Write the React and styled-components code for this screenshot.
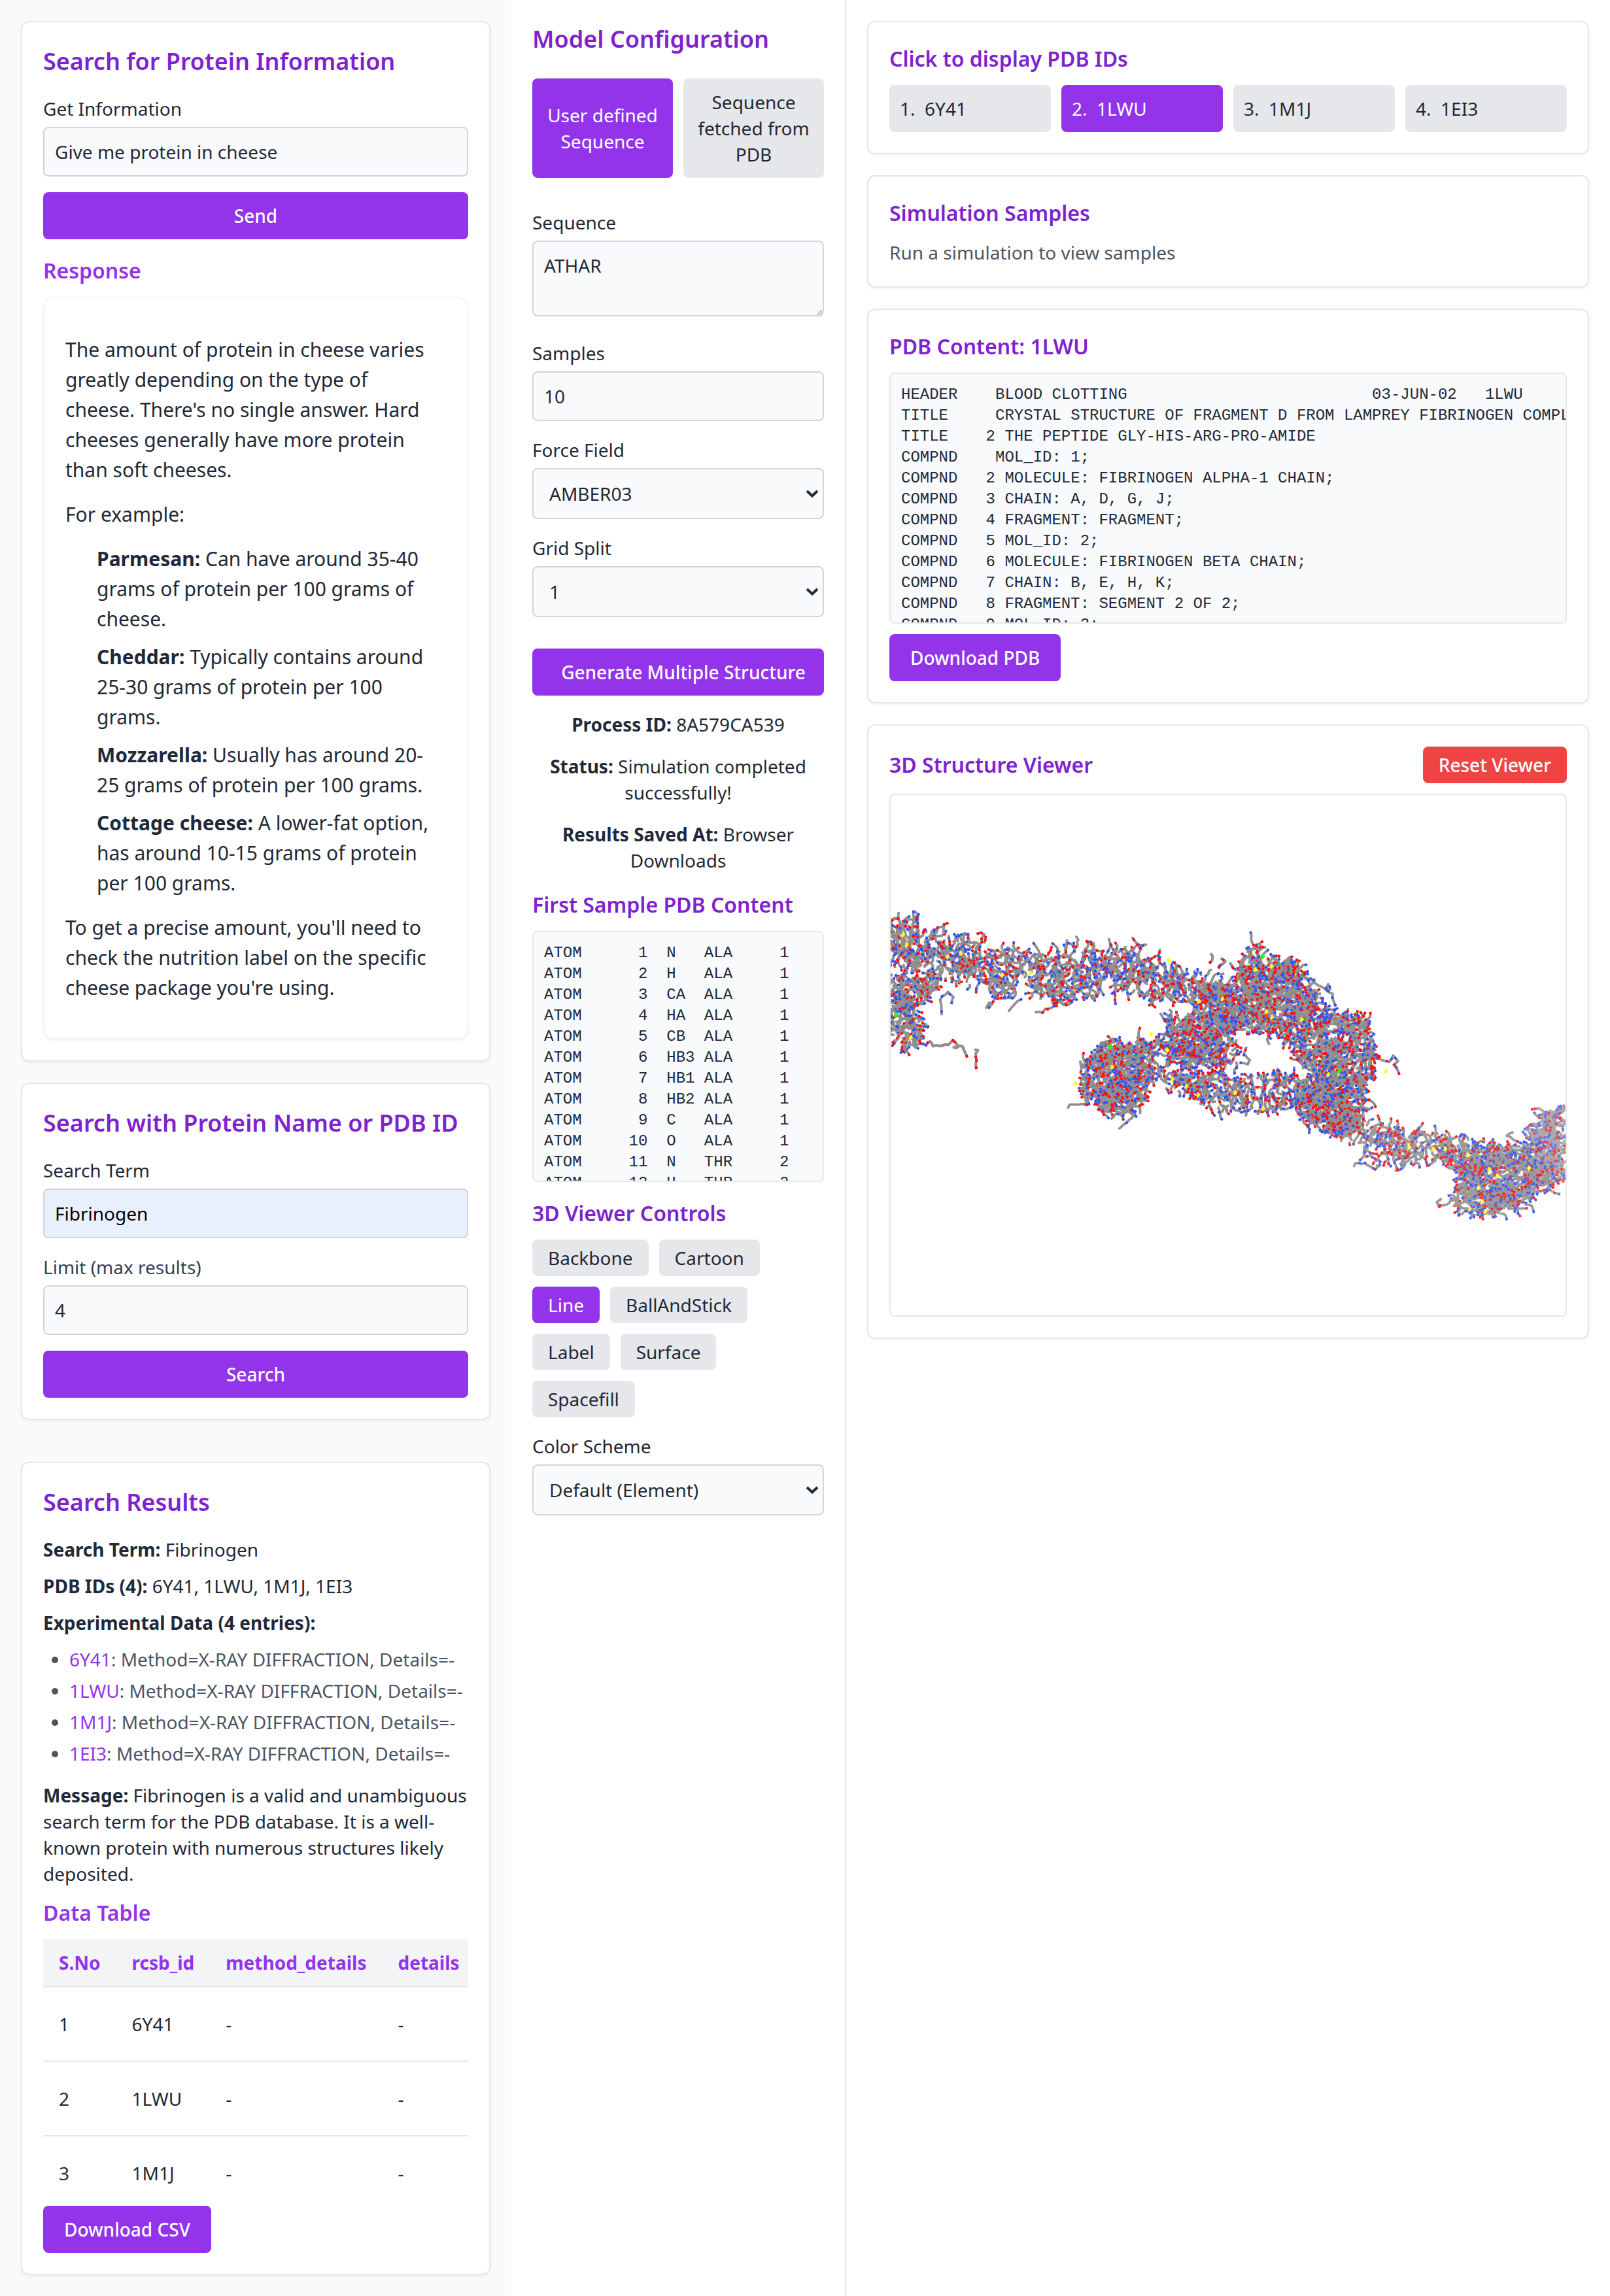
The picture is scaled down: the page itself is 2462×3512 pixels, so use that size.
import React, { useMemo, useState } from "react";
import styled, { createGlobalStyle, css } from "styled-components";

const GlobalStyle = createGlobalStyle`
  *, *::before, *::after { box-sizing: border-box; }
  body {
    margin: 0;
    background: #ffffff;
    color: #1f2937;
    font-family: "Noto Sans", "Liberation Sans", sans-serif;
    font-size: 28px;
    line-height: 40px;
  }
  h1, h2, h3, p, ul, pre { margin: 0; padding: 0; }
  button, input, select, textarea { font: inherit; color: inherit; margin: 0; }
`;

/* ---------- layout ---------- */

const Page = styled.div`
  display: grid;
  grid-template-columns: minmax(0, 391fr) 512px minmax(0, 584fr);
  min-height: 100vh;
`;

const SearchColumn = styled.aside`
  display: flex;
  flex-direction: column;
  gap: 32px;
  padding: 32px;
  background: #f9fafb;
`;

const ConfigColumn = styled.section`
  display: flex;
  flex-direction: column;
  gap: 24px;
  padding: 32px;
  border-right: 2px solid #e5e7eb;
`;

const ViewerColumn = styled.main`
  display: flex;
  flex-direction: column;
  gap: 32px;
  padding: 32px;
`;

const Card = styled.section`
  display: flex;
  flex-direction: column;
  gap: ${(p) => p.$gap || 24}px;
  padding: 32px;
  margin-top: ${(p) => (p.$apart ? 32 : 0)}px;
  background: #ffffff;
  border: 2px solid #e5e7eb;
  border-radius: 12px;
  box-shadow: 0 2px 4px rgba(0, 0, 0, 0.05);
`;

const Stack = styled.div`
  display: flex;
  flex-direction: column;
  gap: ${(p) => p.$gap}px;
`;

const Bar = styled.div`
  display: flex;
  align-items: center;
  justify-content: space-between;
`;

/* ---------- text ---------- */

const Title = styled.h2`
  color: #7e22ce;
  font-size: 36px;
  line-height: 56px;
  font-weight: 600;
`;

const Subtitle = styled.h3`
  color: ${(p) => (p.$bright ? "#9333ea" : "#7e22ce")};
  font-size: 32px;
  line-height: 48px;
  font-weight: 600;
`;

const Muted = styled.p`
  color: #4b5563;
`;

const Status = styled.p`
  text-align: center;
`;

/* ---------- controls ---------- */

const Field = styled.div`
  display: flex;
  flex-direction: column;
  gap: 8px;
`;

const Label = styled.label`
  color: ${(p) => (p.$soft ? "#374151" : "#1f2937")};
`;

const control = css`
  width: 100%;
  padding: 16px;
  background: #f9fafb;
  border: 2px solid #d1d5db;
  border-radius: 8px;
  outline: none;
`;

const TextInput = styled.input`
  ${control}
  height: 76px;
  ${(p) => p.$filled && "background: #e8f0fe; color: #000000;"}
`;

const TextArea = styled.textarea`
  ${control}
  display: block;
  height: 116px;
  margin-bottom: 12px;
  resize: both;
`;

const SelectBox = styled.div`
  display: grid;
  align-items: center;
  > * { grid-area: 1 / 1; }
  > svg { justify-self: end; margin-right: 8px; pointer-events: none; }
`;

const NativeSelect = styled.select`
  ${control}
  height: 78px;
  padding-left: 24px;
  appearance: none;
`;

const Button = styled.button`
  align-self: ${(p) => (p.$fit ? "flex-start" : "stretch")};
  padding: 16px 32px;
  color: #ffffff;
  background: #9333ea;
  border: 0;
  border-radius: 8px;
  font-weight: 500;
  cursor: pointer;
`;

const GenerateButton = styled(Button)`
  margin-top: 24px;
  padding: 16px 24px 16px 40px;
  white-space: nowrap;
`;

const ResetButton = styled(Button)`
  padding: 8px 24px;
  background: #ef4444;
`;

const Choice = styled.button`
  padding: 16px;
  color: ${(p) => (p.$active ? "#ffffff" : "#1f2937")};
  background: ${(p) => (p.$active ? "#9333ea" : "#e5e7eb")};
  border: 0;
  border-radius: 8px;
  cursor: pointer;
`;

const ModeRow = styled.div`
  display: grid;
  grid-template-columns: 1fr 1fr;
  gap: 16px;
  margin: 8px 0 24px;
`;

const StyleRow = styled.div`
  display: flex;
  flex-wrap: wrap;
  gap: 16px;
`;

const StyleChoice = styled(Choice)`
  padding: 8px 24px;
`;

const IdGrid = styled.div`
  display: grid;
  grid-template-columns: repeat(4, 1fr);
  gap: 16px;
`;

const IdChoice = styled(Choice)`
  text-align: left;
  white-space: pre;
`;

/* ---------- content blocks ---------- */

const Answer = styled.div`
  display: flex;
  flex-direction: column;
  gap: 22px;
  padding: 56px 40px 54px 32px;
  background: #ffffff;
  border: 2px solid #f3f4f6;
  border-radius: 16px;
  box-shadow: 0 2px 4px rgba(0, 0, 0, 0.05);
  font-size: 30px;
  line-height: 46px;
`;

const AnswerList = styled.ul`
  display: flex;
  flex-direction: column;
  gap: 12px;
  padding-left: 48px;
  list-style: none;
`;

const EntryList = styled.ul`
  padding-left: 40px;
  margin-bottom: 8px;
  color: #4b5563;
  list-style: disc;
  li + li { margin-top: 8px; }
  a { color: #9333ea; text-decoration: none; }
`;

const TableScroll = styled.div`
  max-height: 384px;
  overflow: auto;
  scrollbar-width: none;
`;

const Table = styled.table`
  min-width: 100%;
  border-collapse: separate;
  border-spacing: 0;
  text-align: left;
  white-space: nowrap;
  th {
    position: sticky;
    top: 0;
    padding: 16px 24px;
    color: #9333ea;
    background: #f3f4f6;
    border-bottom: 2px solid #e5e7eb;
    font-weight: 700;
  }
  td {
    padding: 36px 24px;
    border-bottom: 2px solid #e5e7eb;
  }
`;

const Listing = styled.pre`
  height: 384px;
  padding: 16px;
  overflow: auto;
  scrollbar-width: none;
  background: #f9fafb;
  border: 2px solid #e5e7eb;
  border-radius: 8px;
  font-family: "Liberation Mono", monospace;
  font-size: 24px;
  line-height: 32px;
`;

const Stage = styled.div`
  height: 800px;
  overflow: hidden;
  border: 2px solid #e5e7eb;
  border-radius: 8px;
  svg { display: block; width: 100%; height: 100%; }
`;

/* ---------- data ---------- */

const PDB_IDS = ["6Y41", "1LWU", "1M1J", "1EI3"];

const CHEESES = [
  ["Parmesan:", "Can have around 35-40 grams of protein per 100 grams of cheese."],
  ["Cheddar:", "Typically contains around 25-30 grams of protein per 100 grams."],
  ["Mozzarella:", "Usually has around 20-25 grams of protein per 100 grams."],
  ["Cottage cheese:", "A lower-fat option, has around 10-15 grams of protein per 100 grams."],
];

const SAMPLE_ATOMS = [
  ["N", "ALA", 1],
  ["H", "ALA", 1],
  ["CA", "ALA", 1],
  ["HA", "ALA", 1],
  ["CB", "ALA", 1],
  ["HB3", "ALA", 1],
  ["HB1", "ALA", 1],
  ["HB2", "ALA", 1],
  ["C", "ALA", 1],
  ["O", "ALA", 1],
  ["N", "THR", 2],
  ["H", "THR", 2],
];

const SAMPLE_PDB = SAMPLE_ATOMS.map(
  ([name, residue, seq], i) =>
    "ATOM  " + String(i + 1).padStart(5) + "  " + name.padEnd(4) + residue + String(seq).padStart(6)
).join("\n");

const PDB_CONTENT = [
  "HEADER    BLOOD CLOTTING                          03-JUN-02   1LWU",
  "TITLE     CRYSTAL STRUCTURE OF FRAGMENT D FROM LAMPREY FIBRINOGEN COMPLEX WITH",
  "TITLE    2 THE PEPTIDE GLY-HIS-ARG-PRO-AMIDE",
  "COMPND    MOL_ID: 1;",
  "COMPND   2 MOLECULE: FIBRINOGEN ALPHA-1 CHAIN;",
  "COMPND   3 CHAIN: A, D, G, J;",
  "COMPND   4 FRAGMENT: FRAGMENT;",
  "COMPND   5 MOL_ID: 2;",
  "COMPND   6 MOLECULE: FIBRINOGEN BETA CHAIN;",
  "COMPND   7 CHAIN: B, E, H, K;",
  "COMPND   8 FRAGMENT: SEGMENT 2 OF 2;",
  "COMPND   9 MOL_ID: 3;",
].join("\n");

const VIEW_STYLES = ["Backbone", "Cartoon", "Line", "BallAndStick", "Label", "Surface", "Spacefill"];

/* ---------- molecule drawing ---------- */

/* Outlines of the folded domains, in model units. */
const DOMAINS = [
  { cover: 1.25, lean: true, pts: "32,120 88,125 100,175 190,200 250,235 290,250 400,265 450,240 540,255 600,285 660,320 720,370 800,395 800,480 740,510 650,475 560,440 500,450 400,480 330,460 240,440 170,390 110,345 32,350" },
  { cover: 1.9, pts: "32,370 110,375 140,410 120,470 100,520 100,580 105,620 85,685 65,695 32,630" },
  { cover: 2.3, pts: "830,240 860,232 862,285 935,305 945,360 970,390 985,450 995,520 990,600 960,650 910,615 850,610 795,605 720,560 700,500 740,440 800,400 810,300" },
  { cover: 2.3, pts: "1000,535 1085,550 1100,640 1115,690 1100,790 1080,870 1078,970 1060,1035 980,1020 930,950 965,800 935,740 915,650 960,600" },
  { cover: 2.2, pts: "645,560 720,530 790,560 790,640 805,730 775,765 700,760 625,740 612,660 640,620" },
  { cover: 2.3, pts: "490,675 520,645 600,650 625,710 618,820 600,890 565,960 540,975 495,950 460,890 452,810 470,740" },
  { cover: 1.5, lean: true, pts: "620,780 700,790 820,800 870,795 960,815 980,860 980,965 920,960 800,935 720,935 690,880 635,860" },
  { cover: 1.5, lean: true, fade: 1, pts: "980,980 1080,975 1130,1020 1240,1050 1320,1060 1390,1110 1380,1200 1260,1175 1110,1175 1070,1100 990,1035" },
  { cover: 2.1, fade: 1, pts: "1280,1150 1400,1110 1460,1080 1480,1200 1520,1250 1470,1280 1440,1350 1380,1400 1295,1390 1278,1340 1295,1270" },
  { cover: 2.3, fade: 2, pts: "1450,1070 1465,1000 1480,950 1530,940 1532,1245 1450,1235" },
];

/* Loose ends that hang clear of the domains. */
const LOOPS = [
  { red: true, pts: "110,670 120,650 125,672 160,668 170,645 180,665 172,680 190,670 195,690 200,715" },
  { red: true, pts: "218,688 225,690 221,705 222,765" },
  { red: true, pts: "742,275 748,290 742,315" },
  { red: true, pts: "765,295 775,310 760,335" },
  { red: true, pts: "785,315 790,335" },
  { pts: "85,95 92,110 92,130 70,128 58,140 60,165" },
  { pts: "50,98 50,125 36,130" },
  { pts: "243,512 250,485 258,490 250,505 262,470 300,465" },
  { pts: "293,525 305,495 320,470" },
  { pts: "352,528 368,528 375,515 400,500 405,480" },
  { pts: "568,205 582,240 598,240 585,250" },
  { pts: "424,215 420,275 405,300" },
  { pts: "443,200 448,215 445,250" },
  { pts: "516,210 520,240 530,270" },
  { pts: "630,255 625,285 612,300" },
  { pts: "530,440 530,488" },
  { pts: "630,530 640,560" },
  { pts: "970,395 1000,435 1008,430 1003,410 998,425 1012,450 1018,495" },
  { pts: "1048,510 1045,545" },
  { pts: "1120,730 1140,740 1148,712 1158,735 1150,750 1160,790" },
  { pts: "538,1028 548,1010 562,990 575,955" },
  { pts: "425,940 430,925 450,920 465,925" },
  { pts: "453,735 455,780" },
  { pts: "145,540 142,470 158,440 170,460 168,488" },
  { pts: "1060,1190 1065,1175 1085,1175 1108,1200 1115,1190 1108,1185", fade: 1 },
  { pts: "1415,1040 1400,1055 1415,1075 1430,1090", fade: 1 },
  { pts: "1460,1300 1490,1285 1500,1295 1515,1308", fade: 2 },
  { red: true, pts: "1255,1325 1246,1340 1250,1362", fade: 1 },
  { pts: "1440,1350 1455,1355 1460,1382", fade: 1 },
  { pts: "822,675 815,710 830,730 825,750 808,745" },
  { pts: "875,620 868,640 872,668" },
  { pts: "928,760 928,815" },
  { pts: "890,768 905,815" },
];

const SPOTS = [
  ["#FFF830", "58,195 66,238 186,275 157,290 278,368 341,360 648,305 876,330 840,345 715,480 767,470 865,525 877,548 943,558 609,620 645,690 522,762 687,845 713,880 795,872 857,940 1002,795 441,832 75,635 1130,780 656,815"],
  ["#FFFF50", "1182,1105 1235,1113 1262,1112 1312,1138 1360,1200 1448,1195 1377,1228 1336,1280 1344,1340 1316,1368 1351,1380"],
  ["#33F010", "856,288 42,540 517,675 1026,778"],
];

const PALETTES = [
  { carbon: "#909090", nitrogen: "#3050F8", oxygen: "#FF0D0D" },
  { carbon: "#9B9B9B", nitrogen: "#4560F8", oxygen: "#FA2A2A" },
  { carbon: "#ABABAB", nitrogen: "#6078F2", oxygen: "#F04848" },
];

const DEPTHS = 5;
const BOND = 5;

const project = ([x, y]) => [x / 1.452 - 22, y / 2.8 + 144];
const parse = (text) => text.split(" ").map((pair) => project(pair.split(",").map(Number)));

function makeRandom(seed) {
  let s = seed;
  return () => {
    s = (s * 1664525 + 1013904223) % 4294967296;
    return s / 4294967296;
  };
}

function inside(poly, x, y) {
  let hit = false;
  for (let i = 0, j = poly.length - 1; i < poly.length; j = i++) {
    const [xi, yi] = poly[i];
    const [xj, yj] = poly[j];
    if (yi > y !== yj > y && x < ((xj - xi) * (y - yi)) / (yj - yi) + xi) hit = !hit;
  }
  return hit;
}

/* Each depth holds grey backbones with the coloured atoms of that depth over them. */
function buildMolecule() {
  const random = makeRandom(20602);
  const layers = PALETTES.map(() =>
    Array.from({ length: DEPTHS }, () => ({ carbon: [], nitrogen: [], oxygen: [] }))
  );

  const addChain = (slot, pts, redShare) => {
    slot.carbon.push("M" + pts.map(([x, y]) => `${x.toFixed(1)} ${y.toFixed(1)}`).join("L"));
    for (let i = 1; i < pts.length; i++) {
      const end = i === pts.length - 1;
      if (random() > (end ? 0.9 : 0.3)) continue;
      const [ax, ay] = pts[i - 1];
      const [bx, by] = pts[i];
      const length = Math.hypot(bx - ax, by - ay) || 1;
      const dx = ((bx - ax) / length) * 2;
      const dy = ((by - ay) / length) * 2;
      const kind = random() < redShare ? "oxygen" : "nitrogen";
      slot[kind].push(
        `M${(bx - dx).toFixed(1)} ${(by - dy).toFixed(1)}L${(bx + dx).toFixed(1)} ${(by + dy).toFixed(1)}`
      );
    }
  };

  for (const domain of DOMAINS) {
    const poly = parse(domain.pts);
    const layer = layers[domain.fade || 0];
    const xs = poly.map((p) => p[0]);
    const ys = poly.map((p) => p[1]);
    const [x0, x1] = [Math.min(...xs), Math.max(...xs)];
    const [y0, y1] = [Math.min(...ys), Math.max(...ys)];
    const tries = Math.round(((x1 - x0) * (y1 - y0) * domain.cover) / 90);
    for (let n = 0; n < tries; n++) {
      let x = x0 + random() * (x1 - x0);
      let y = y0 + random() * (y1 - y0);
      if (!inside(poly, x, y)) continue;
      let angle = domain.lean
        ? (random() < 0.5 ? 1 : -1) * (Math.PI / 2) + (random() - 0.5) * 1.8
        : random() * Math.PI * 2;
      const steps = 4 + Math.floor(random() * 4);
      const pts = [[x, y]];
      for (let i = 0; i < steps; i++) {
        x += Math.cos(angle) * BOND;
        y += Math.sin(angle) * BOND;
        pts.push([x, y]);
        if (!inside(poly, x, y) && random() < 0.55) break;
        angle += (random() - 0.5) * 1.9;
      }
      addChain(layer[n % DEPTHS], pts, 0.46);
    }
  }

  for (const loop of LOOPS) {
    const corners = parse(loop.pts);
    const pts = [corners[0]];
    for (let i = 1; i < corners.length; i++) {
      const [ax, ay] = corners[i - 1];
      const [bx, by] = corners[i];
      const parts = Math.max(1, Math.round(Math.hypot(bx - ax, by - ay) / BOND));
      for (let k = 1; k <= parts; k++) {
        pts.push([
          ax + ((bx - ax) * k) / parts + (random() - 0.5) * 2,
          ay + ((by - ay) * k) / parts + (random() - 0.5) * 2,
        ]);
      }
    }
    if (loop.red) {
      addChain(layers[loop.fade || 0][0], pts, 0.9);
      addChain(layers[loop.fade || 0][1], pts, 0.9);
    } else {
      addChain(layers[loop.fade || 0][0], pts, 0.45);
    }
  }

  return layers
    .map((layer, i) => ({ layer, palette: PALETTES[i] }))
    .reverse()
    .flatMap(({ layer, palette }) =>
      layer.flatMap((slot) =>
        ["carbon", "nitrogen", "oxygen"].map((kind) => ({ color: palette[kind], d: slot[kind].join("") }))
      )
    );
}

function Molecule() {
  const paths = useMemo(buildMolecule, []);
  return (
    <svg viewBox="0 0 1032 796" preserveAspectRatio="xMidYMid slice" role="img" aria-label="3D structure of 1LWU">
      <g fill="none" strokeWidth="3.8" strokeLinejoin="round">
        {paths.map((p, i) => (
          <path key={i} d={p.d} stroke={p.color} />
        ))}
      </g>
      {SPOTS.map(([color, pts]) => (
        <path
          key={color}
          d={parse(pts).map(([x, y]) => `M${x.toFixed(1)} ${(y - 3).toFixed(1)}l2 3l-3 3`).join("")}
          fill="none"
          stroke={color}
          strokeWidth={color === "#33F010" ? 5 : 4}
        />
      ))}
    </svg>
  );
}

/* ---------- pieces ---------- */

function Chevron() {
  return (
    <svg width="20" height="12" viewBox="0 0 20 12" aria-hidden="true">
      <path d="M2 2l8 7.5L18 2" fill="none" stroke="#1f2937" strokeWidth="4" />
    </svg>
  );
}

function SelectField({ id, label, options }) {
  return (
    <Field>
      <Label htmlFor={id}>{label}</Label>
      <SelectBox>
        <NativeSelect id={id}>
          {options.map((o) => (
            <option key={o}>{o}</option>
          ))}
        </NativeSelect>
        <Chevron />
      </SelectBox>
    </Field>
  );
}

function InputField({ id, label, soft, filled, ...rest }) {
  return (
    <Field>
      <Label htmlFor={id} $soft={soft}>{label}</Label>
      <TextInput id={id} $filled={filled} {...rest} />
    </Field>
  );
}

export default function App() {
  const [mode, setMode] = useState("user");
  const [viewStyle, setViewStyle] = useState("Line");
  const [pdbId, setPdbId] = useState("1LWU");

  return (
    <>
      <GlobalStyle />
      <Page>
        <SearchColumn>
          <Card>
            <Title>Search for Protein Information</Title>
            <InputField id="question" label="Get Information" type="text" defaultValue="Give me protein in cheese" />
            <Button type="button">Send</Button>
            <Stack $gap={16}>
              <Subtitle $bright>Response</Subtitle>
              <Answer>
                <p>
                  The amount of protein in cheese varies greatly depending on the type of cheese. There's no
                  single answer. Hard cheeses generally have more protein than soft cheeses.
                </p>
                <p>For example:</p>
                <AnswerList>
                  {CHEESES.map(([name, text]) => (
                    <li key={name}>
                      <strong>{name}</strong> {text}
                    </li>
                  ))}
                </AnswerList>
                <p>
                  To get a precise amount, you'll need to check the nutrition label on the specific cheese
                  package you're using.
                </p>
              </Answer>
            </Stack>
          </Card>

          <Card>
            <Title>Search with Protein Name or PDB ID</Title>
            <InputField id="term" label="Search Term" type="text" defaultValue="Fibrinogen" filled />
            <InputField id="limit" label="Limit (max results)" type="number" defaultValue="4" soft />
            <Button type="button">Search</Button>
          </Card>

          <Card $apart>
            <Title>Search Results</Title>
            <Stack $gap={16}>
              <p><strong>Search Term:</strong> Fibrinogen</p>
              <p><strong>PDB IDs (4):</strong> {PDB_IDS.join(", ")}</p>
              <p><strong>Experimental Data (4 entries):</strong></p>
              <EntryList>
                {PDB_IDS.map((id) => (
                  <li key={id}>
                    <a href={`#${id}`}>{id}</a>: Method=X-RAY DIFFRACTION, Details=-
                  </li>
                ))}
              </EntryList>
              <p>
                <strong>Message:</strong> Fibrinogen is a valid and unambiguous search term for the PDB
                database. It is a well-known protein with numerous structures likely deposited.
              </p>
              <Subtitle $bright>Data Table</Subtitle>
              <TableScroll>
                <Table>
                  <thead>
                    <tr>
                      <th>S.No</th>
                      <th>rcsb_id</th>
                      <th>method_details</th>
                      <th>details</th>
                    </tr>
                  </thead>
                  <tbody>
                    {PDB_IDS.map((id, i) => (
                      <tr key={id}>
                        <td>{i + 1}</td>
                        <td>{id}</td>
                        <td>-</td>
                        <td>-</td>
                      </tr>
                    ))}
                  </tbody>
                </Table>
              </TableScroll>
            </Stack>
            <Button type="button" $fit>Download CSV</Button>
          </Card>
        </SearchColumn>

        <ConfigColumn>
          <Title>Model Configuration</Title>
          <ModeRow>
            <Choice type="button" $active={mode === "user"} onClick={() => setMode("user")}>
              User defined Sequence
            </Choice>
            <Choice type="button" $active={mode === "pdb"} onClick={() => setMode("pdb")}>
              Sequence fetched from PDB
            </Choice>
          </ModeRow>
          <Field>
            <Label htmlFor="sequence">Sequence</Label>
            <TextArea id="sequence" rows={2} defaultValue="ATHAR" />
          </Field>
          <InputField id="samples" label="Samples" type="number" defaultValue="10" />
          <SelectField id="force" label="Force Field" options={["AMBER03", "AMBER10", "AMBER14"]} />
          <SelectField id="grid" label="Grid Split" options={["1", "2", "4"]} />
          <GenerateButton type="button">Generate Multiple Structure</GenerateButton>
          <Status><strong>Process ID:</strong> 8A579CA539</Status>
          <Status><strong>Status:</strong> Simulation completed successfully!</Status>
          <Status><strong>Results Saved At:</strong> Browser Downloads</Status>
          <Stack $gap={16}>
            <Subtitle>First Sample PDB Content</Subtitle>
            <Listing>{SAMPLE_PDB}</Listing>
          </Stack>
          <Stack $gap={16}>
            <Subtitle>3D Viewer Controls</Subtitle>
            <StyleRow>
              {VIEW_STYLES.map((name) => (
                <StyleChoice key={name} type="button" $active={name === viewStyle} onClick={() => setViewStyle(name)}>
                  {name}
                </StyleChoice>
              ))}
            </StyleRow>
          </Stack>
          <SelectField id="colors" label="Color Scheme" options={["Default (Element)", "Chain", "Residue"]} />
        </ConfigColumn>

        <ViewerColumn>
          <Card $gap={16}>
            <Subtitle>Click to display PDB IDs</Subtitle>
            <IdGrid>
              {PDB_IDS.map((id, i) => (
                <IdChoice key={id} type="button" $active={id === pdbId} onClick={() => setPdbId(id)}>
                  {`${i + 1}.  ${id}`}
                </IdChoice>
              ))}
            </IdGrid>
          </Card>

          <Card $gap={16}>
            <Subtitle>Simulation Samples</Subtitle>
            <Muted>Run a simulation to view samples</Muted>
          </Card>

          <Card $gap={16}>
            <Subtitle>PDB Content: {pdbId}</Subtitle>
            <Listing>{PDB_CONTENT}</Listing>
            <Button type="button" $fit>Download PDB</Button>
          </Card>

          <Card $gap={16}>
            <Bar>
              <Subtitle>3D Structure Viewer</Subtitle>
              <ResetButton type="button">Reset Viewer</ResetButton>
            </Bar>
            <Stage>
              <Molecule />
            </Stage>
          </Card>
        </ViewerColumn>
      </Page>
    </>
  );
}
